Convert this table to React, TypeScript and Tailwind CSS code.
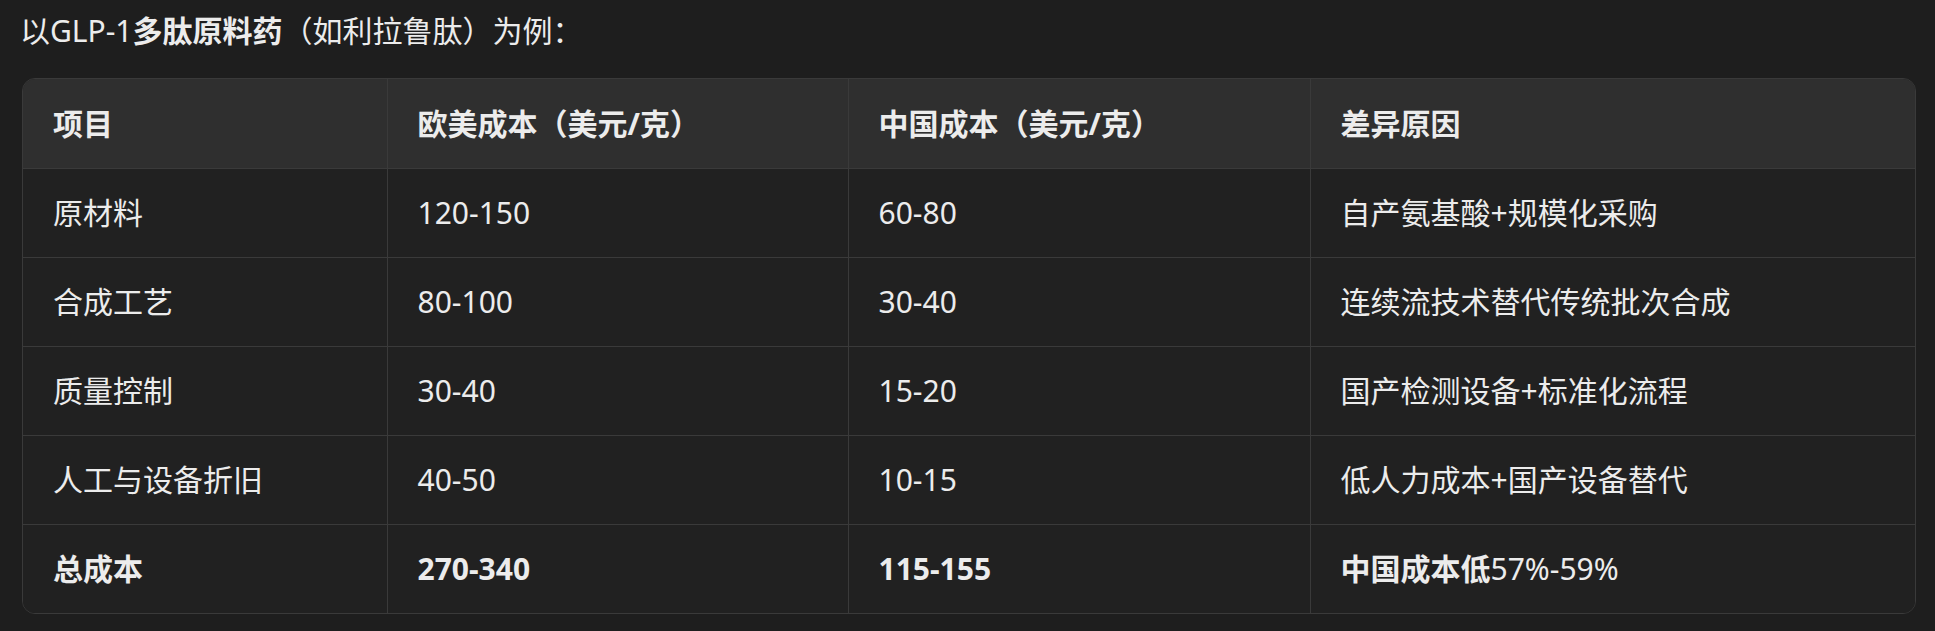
const rows = [
  { item: "原材料", eu: "120-150", cn: "60-80", reason: "自产氨基酸+规模化采购" },
  { item: "合成工艺", eu: "80-100", cn: "30-40", reason: "连续流技术替代传统批次合成" },
  { item: "质量控制", eu: "30-40", cn: "15-20", reason: "国产检测设备+标准化流程" },
  { item: "人工与设备折旧", eu: "40-50", cn: "10-15", reason: "低人力成本+国产设备替代" },
];

const font = { fontFamily: '"Noto Sans", "Noto Sans CJK SC", sans-serif' };

export default function App() {
  return (
    <div className="min-h-[631px] bg-[#1e1e1e] px-[20px] pt-[8px] text-[30px] text-[#ececec]" style={font}>
      <p className="leading-[45px]">
        以GLP-1<strong className="font-bold">多肽原料药</strong>（如利拉鲁肽）为例：
      </p>
      <div className="mt-[25px] ml-[2px] w-[1894px] overflow-hidden rounded-[13px] border border-[#3a3a3a]">
        <table className="w-full table-fixed border-collapse text-left">
          <colgroup>
            <col className="w-[364px]" />
            <col className="w-[461px]" />
            <col className="w-[462px]" />
            <col className="w-[605px]" />
          </colgroup>
          <thead>
            <tr className="bg-[#2f2f2f]">
              <th className="border-b border-r border-[#3a3a3a] px-[30px] py-[22px] leading-[45px] font-bold">项目</th>
              <th className="border-b border-r border-[#3a3a3a] px-[30px] py-[22px] leading-[45px] font-bold">欧美成本（美元/克）</th>
              <th className="border-b border-r border-[#3a3a3a] px-[30px] py-[22px] leading-[45px] font-bold">中国成本（美元/克）</th>
              <th className="border-b border-[#3a3a3a] px-[30px] py-[22px] leading-[45px] font-bold">差异原因</th>
            </tr>
          </thead>
          <tbody className="bg-[#212121]">
            {rows.map((r) => (
              <tr key={r.item}>
                <td className="border-b border-r border-[#3a3a3a] px-[30px] py-[22px] leading-[44px]">{r.item}</td>
                <td className="border-b border-r border-[#3a3a3a] px-[30px] py-[22px] leading-[44px]">{r.eu}</td>
                <td className="border-b border-r border-[#3a3a3a] px-[30px] py-[22px] leading-[44px]">{r.cn}</td>
                <td className="border-b border-[#3a3a3a] px-[30px] py-[22px] leading-[44px]">{r.reason}</td>
              </tr>
            ))}
            <tr>
              <td className="border-r border-[#3a3a3a] px-[30px] py-[22px] leading-[44px] font-bold">总成本</td>
              <td className="border-r border-[#3a3a3a] px-[30px] py-[22px] leading-[44px] font-bold">270-340</td>
              <td className="border-r border-[#3a3a3a] px-[30px] py-[22px] leading-[44px] font-bold">115-155</td>
              <td className="px-[30px] py-[22px] leading-[44px]">
                <strong className="font-bold">中国成本低</strong>57%-59%
              </td>
            </tr>
          </tbody>
        </table>
      </div>
    </div>
  );
}
